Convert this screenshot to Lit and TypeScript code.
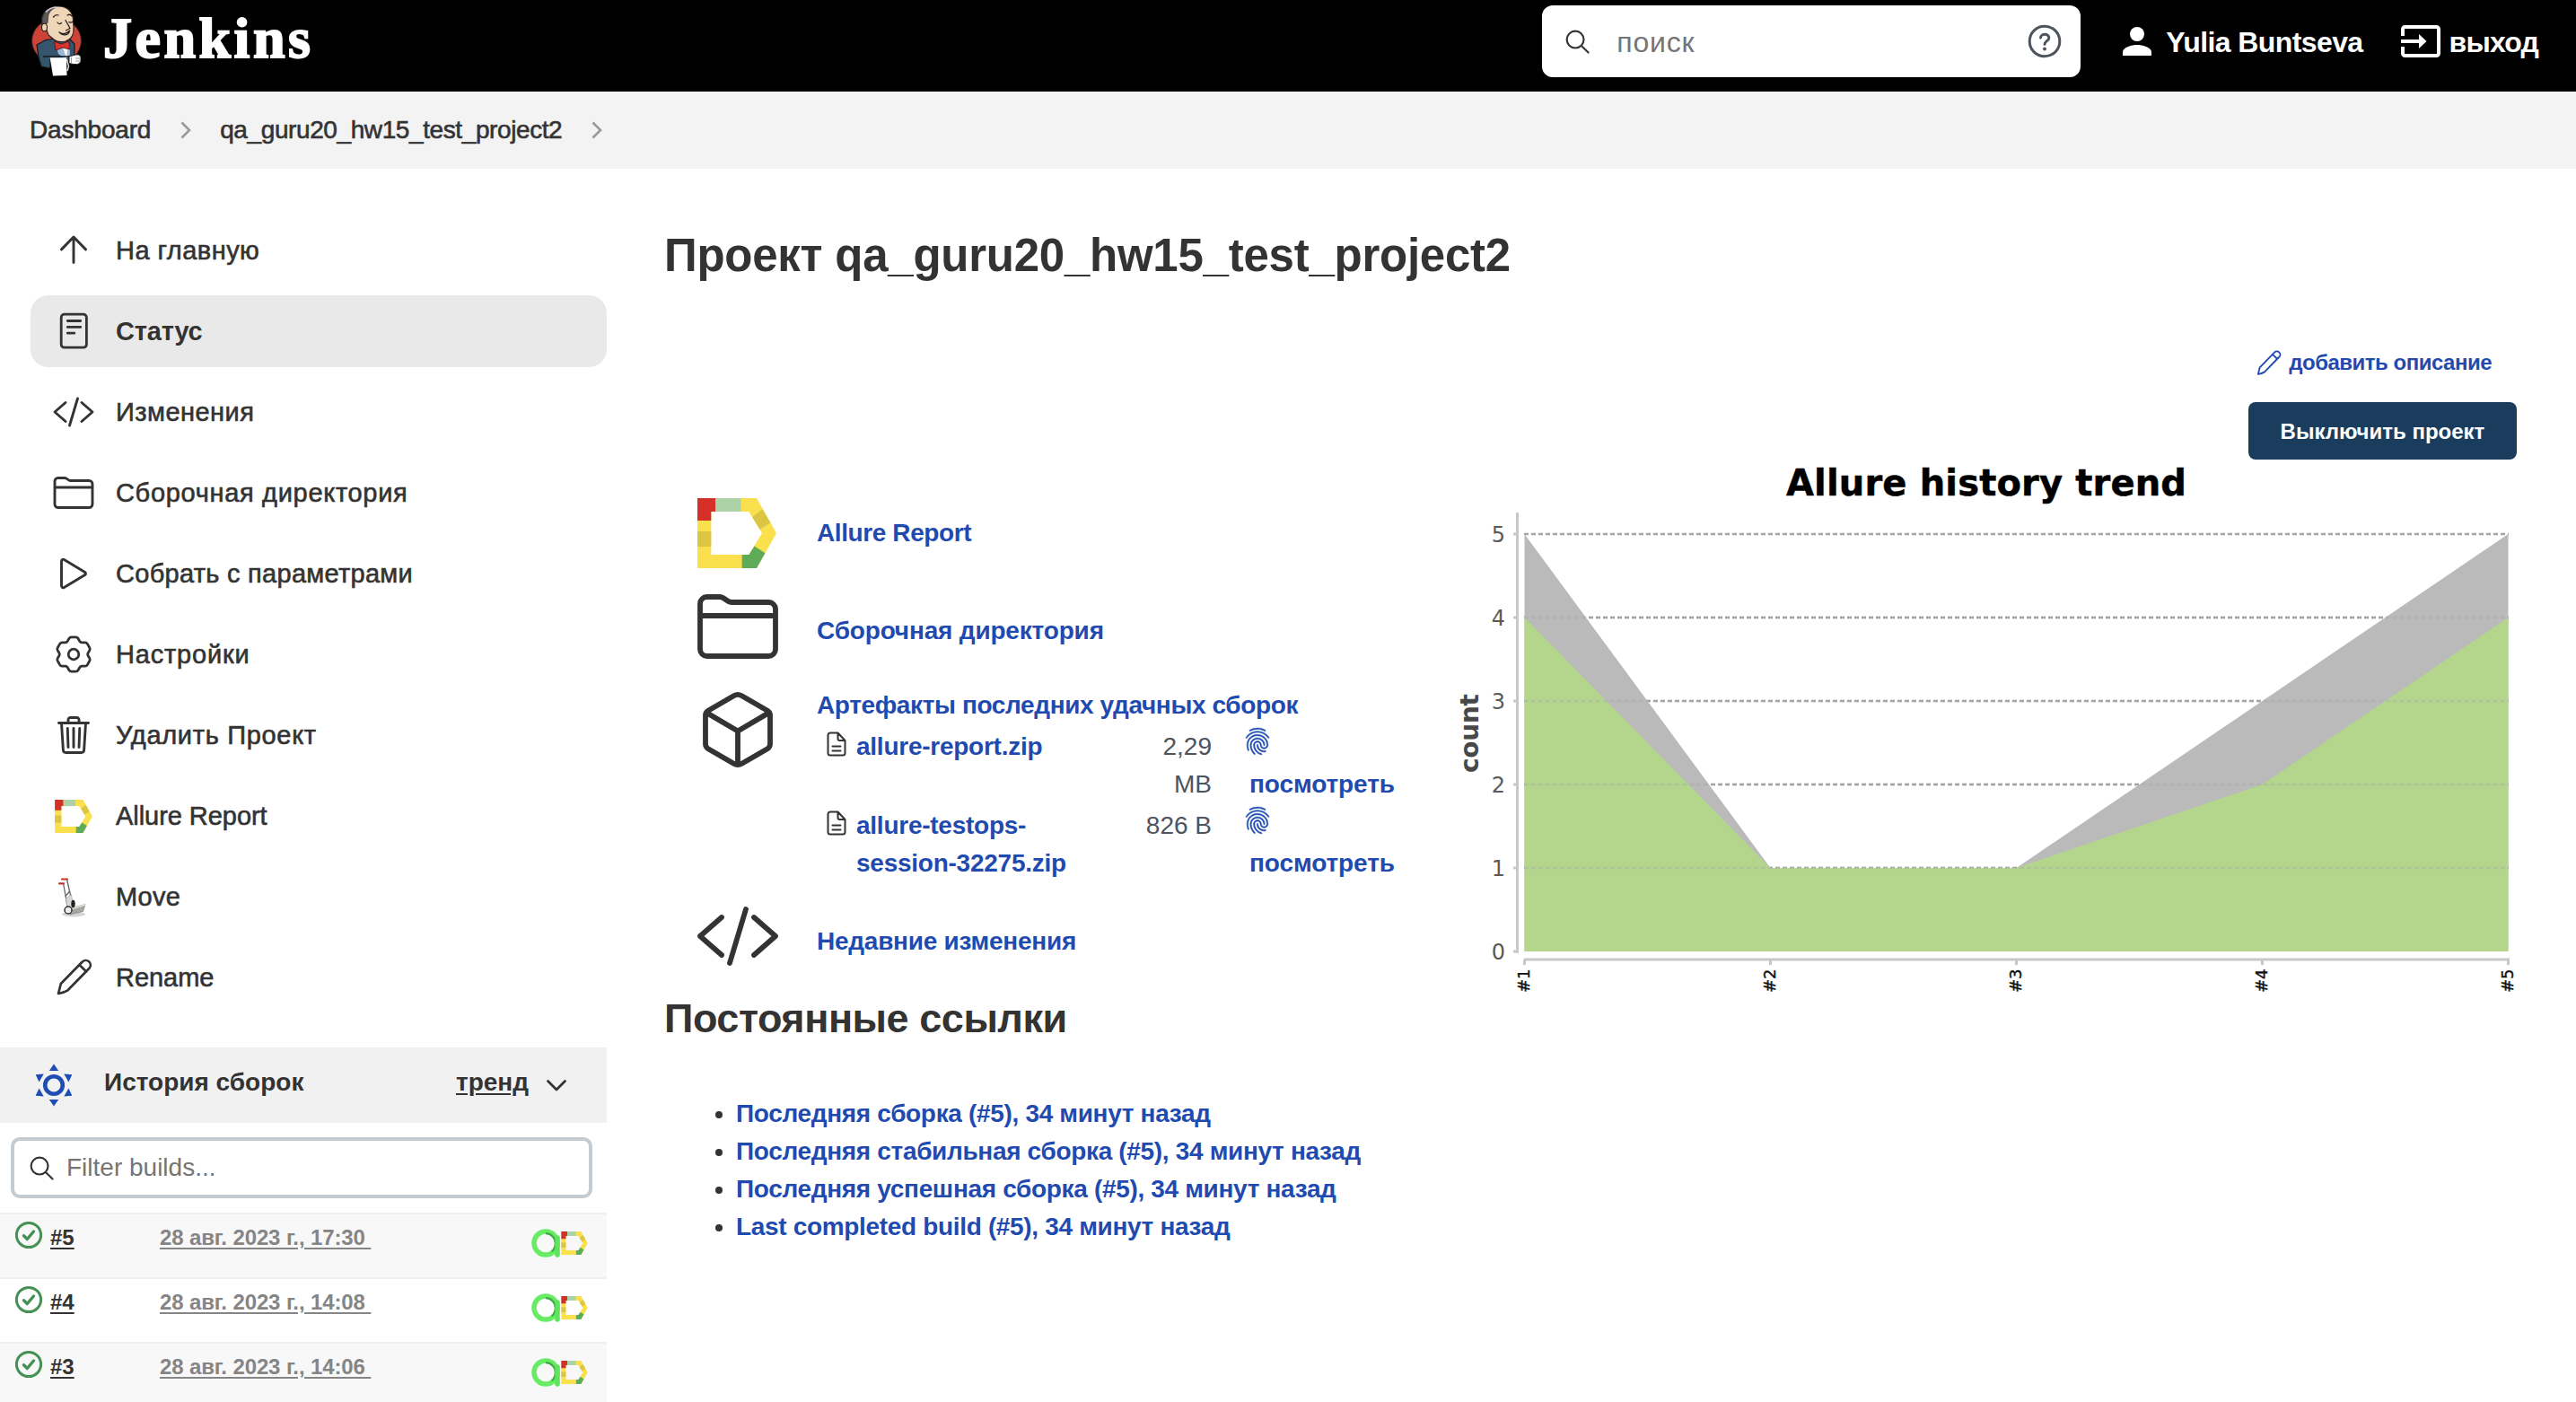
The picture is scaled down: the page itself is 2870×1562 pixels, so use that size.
import { LitElement, html, css, svg, nothing } from "lit";
import { customElement, property } from "lit/decorators.js";

const stroke = (body: unknown, width = 31) => svg`<g fill="none" stroke="currentColor" stroke-width=${width} stroke-linecap="round" stroke-linejoin="round">${body}</g>`;

const allureMark = svg`
  <path fill="#fae04d" fill-rule="evenodd" d="M0 0H66L88 39 66 78H0ZM15.3 15V63H57.4L72 39 57.4 15Z"/>
  <path fill="#d43027" d="M0 0H20V15H15.3V25H0Z"/>
  <path fill="#aed2a8" d="M20 0H48.5V15H20Z"/>
  <path fill="#dbc543" d="M72.6 12.2 81.4 27.6 69.5 34.8 61 21Z"/>
  <path fill="#dbc543" d="M0 37H15.3V54H0Z"/>
  <path fill="#5fac58" d="M49.7 63H57.4L63.5 53.5 75.5 61.3 66 78H49.7Z"/>`;

/* Closed six-lobe outline with every corner eased by a short curve. */
const gearPath = (() => {
  const pts: number[][] = [];
  for (let k = 0; k < 6; k++) {
    const a = (k * Math.PI) / 3;
    for (const [x, y] of [[-4.2, -19.1], [4.2, -19.1], [7.6, -13.2]]) {
      pts.push([24 + x * Math.cos(a) - y * Math.sin(a), 24 + x * Math.sin(a) + y * Math.cos(a)]);
    }
  }
  const mix = (p: number[], q: number[], t: number) => `${(p[0] + (q[0] - p[0]) * t).toFixed(2)} ${(p[1] + (q[1] - p[1]) * t).toFixed(2)}`;
  return pts.map((p, i) => {
    const a = pts[(i + 17) % 18];
    const b = pts[(i + 1) % 18];
    return `${i ? "L" : "M"}${mix(p, a, 0.22)}Q${p[0].toFixed(2)} ${p[1].toFixed(2)} ${mix(p, b, 0.22)}`;
  }).join("") + "Z";
})();

const ICONS: Record<string, { box: string; body: unknown }> = {
  up: { box: "0 0 512 512", body: stroke(svg`<path d="M112 244l144-148 144 148M256 100v300"/>`) },
  status: {
    box: "0 0 48 48",
    body: svg`<rect x="10.2" y="5.2" width="28.2" height="37" rx="3.5" fill="none" stroke="currentColor" stroke-width="2.8"/>
      <path d="M17.3 12.5H31.7M17.3 19.4H31.7M17.3 26.2H24.8" fill="none" stroke="currentColor" stroke-width="2.8" stroke-linecap="round"/>`,
  },
  code: { box: "0 0 512 512", body: stroke(svg`<path d="M160 368L32 256l128-112M352 368l128-112-128-112M304 96l-96 320"/>`) },
  folder: {
    box: "0 0 512 512",
    body: stroke(svg`<path d="M440 432H72a40 40 0 01-40-40V120a40 40 0 0140-40h75.89a40 40 0 0122.19 6.72l27.84 18.56a40 40 0 0022.19 6.72H440a40 40 0 0140 40v240a40 40 0 01-40 40zM32 192h448"/>`),
  },
  play: {
    box: "0 0 512 512",
    body: stroke(svg`<path d="M112 111v290c0 17.44 17 28.52 31 20.16l247.9-148.37c12.12-7.25 12.12-26.33 0-33.58L143 90.84c-14-8.36-31 2.72-31 20.16z"/>`),
  },
  gear: {
    box: "0 0 48 48",
    body: svg`<g fill="none" stroke="currentColor" stroke-width="2.8" stroke-linejoin="round"><circle cx="24" cy="24" r="5.8"/><path d=${gearPath}/></g>`,
  },
  trash: {
    box: "0 0 512 512",
    body: stroke(svg`<path d="M112 112l20 320c.95 18.49 14.4 32 32 32h184c17.67 0 30.87-13.51 32-32l20-320M80 112h352M192 112V72h0a23.93 23.93 0 0124-24h80a23.93 23.93 0 0124 24h0v40M256 176v224M184 176l8 224M328 176l-8 224"/>`),
  },
  allure: { box: "0 0 88 78", body: allureMark },
  truck: {
    box: "0 0 48 48",
    body: svg`<ellipse cx="24" cy="43.500" rx="13" ry="3" fill="#000" opacity=".16"/>
      <path d="M12.500 9 17.500 37M16.500 4.500 22.500 31M14.500 24 19.500 18M15.500 29 20.500 23" fill="none" stroke="#666" stroke-width="1.300"/>
      <path d="M15.500 26l1.500 11 7-1.500-2.500-14z" fill="#d8dad6" stroke="#999" stroke-width=".5"/>
      <path d="M8 9.300h5M11 4.500h6" stroke="#c8332c" stroke-width="2.200" stroke-linecap="round"/>
      <path d="M22 36.500l15-4-2.500 8-14.500 3.500z" fill="#a4a69f" stroke="#777" stroke-width=".6"/>
      <path d="M22 37.500 37 33" stroke="#e4e5e1" stroke-width="1.500"/>
      <ellipse cx="23.500" cy="32" rx="2.200" ry="4.200" fill="#222"/>
      <circle cx="18" cy="39" r="4" fill="#eee" stroke="#333" stroke-width="1.500"/>`,
  },
  pencil: {
    box: "0 0 48 48",
    body: svg`<path d="M7 42 9.800 31 33.500 6.800a5.300 5.300 0 018 7L17.500 38.300Q13 41 7 42ZM30.500 10 38.200 17.500" fill="none" stroke="currentColor" stroke-width="2.700" stroke-linejoin="round" stroke-linecap="round"/>`,
  },
  cube: {
    box: "0 0 512 512",
    body: stroke(svg`<path d="M448 341.37V170.61A32 32 0 00432.11 143l-152-88.46a47.94 47.94 0 00-48.24 0L79.89 143A32 32 0 0064 170.61v170.76A32 32 0 0079.89 369l152 88.46a48 48 0 0048.24 0l152-88.46A32 32 0 00448 341.37zM69 153.99l187 110 187-110M256 463.99v-200"/>`),
  },
  file: {
    box: "0 0 24 30",
    body: svg`<path d="M13.500 2.500H5A2.500 2.500 0 002.500 5V25A2.500 2.500 0 005 27.500H19A2.500 2.500 0 0021.500 25V11ZM13.500 2.500V9A2 2 0 0015.500 11H21.500M7.500 17.500H16.500M7.500 22.500H16.500" fill="none" stroke="currentColor" stroke-width="2" stroke-linejoin="round" stroke-linecap="round"/>`,
  },
  finger: {
    box: "0 0 512 512",
    body: svg`<path fill="currentColor" stroke="currentColor" stroke-width="7" d="M390.420 75.280a10.450 10.450 0 01-5.320-1.440C340.720 50.080 302.350 40 256.350 40c-45.770 0-89.230 11.280-128.760 33.840C122 77 115.110 74.800 111.870 69a12.400 12.400 0 014.630-16.320A281.810 281.810 0 01256.350 16c49.230 0 92.230 11.280 139.390 36.480a12 12 0 014.850 16.080 11.300 11.300 0 01-10.170 6.720zm-330.790 126a11.730 11.730 0 01-6.700-2.160 12.260 12.260 0 01-2.780-16.800c22.890-33.600 52-60 86.690-78.480 72.580-38.840 165.850-39.040 238.660-.24 34.680 18.480 63.800 44.640 86.690 78a12.290 12.290 0 01-2.780 16.800 11.260 11.260 0 01-16.180-2.880c-20.800-30.240-47.150-54-78.360-70.560-66.340-36.240-151.170-36.240-217.280.24-31.440 16.800-57.790 40.800-78.590 71a10 10 0 01-9.370 5.080zM204.100 491a10.660 10.660 0 01-8.090-3.600C175.900 466.480 165 453 149.550 424c-16-29.520-24.270-65.520-24.270-104.160 0-71.280 58.710-129.360 130.840-129.360S387 248.560 387 319.840a11.560 11.560 0 11-23.110 0c0-58.080-48.320-105.360-107.720-105.360S148.400 261.760 148.400 319.840c0 34.560 7.390 66.480 21.490 92.400 14.800 27.600 25 39.360 42.770 58.080a12.670 12.670 0 010 17 12.440 12.440 0 01-8.560 3.680zm165.750-44.400c-27.510 0-51.780-7.200-71.660-21.360a129.100 129.100 0 01-55-105.360 11.570 11.570 0 1123.120 0 104.280 104.280 0 0044.840 85.440c16.410 11.520 35.600 17 58.720 17a147.410 147.410 0 0024-2.400c6.240-1.200 12.250 3.120 13.400 9.840a11.920 11.920 0 01-9.470 13.920 152.280 152.280 0 01-27.950 2.880zM323.380 496a13 13 0 01-3-.48c-36.760-10.560-60.800-24.720-86-50.400-32.370-33.360-50.160-77.760-50.160-125.280 0-38.880 31.900-70.560 71.190-70.560s71.200 31.680 71.200 70.560c0 25.680 21.500 46.560 48.080 46.560s48.080-20.880 48.080-46.560c0-90.480-75.130-163.920-167.590-163.920-65.650 0-125.750 37.920-152.790 96.720-9 19.440-13.640 42.240-13.640 67.200 0 18.720 1.610 48.240 15.480 86.640 2.320 6.240-.69 13.200-6.700 15.360a11.340 11.340 0 01-14.790-7 276.390 276.390 0 01-16.880-95c0-28.800 5.320-55 15.720-77.760 30.750-67 98.940-110.400 173.600-110.400 105.180 0 190.710 84.240 190.710 187.920 0 38.880-32.060 70.560-71.340 70.560s-71.200-31.680-71.200-70.560C303.500 293.920 282 273 255.420 273s-48.080 20.880-48.080 46.560c0 41 15.260 79.440 43.230 108.240 22 22.560 43 35 75.590 44.160 6.240 1.680 9.710 8.400 8.090 14.640a11.390 11.390 0 01-10.870 9.400z"/>`,
  },
  search: {
    box: "0 0 28 28",
    body: svg`<g fill="none" stroke="currentColor" stroke-width="2.200" stroke-linecap="round"><circle cx="11.500" cy="11.500" r="9.800"/><path d="M18.800 18.800 26.500 26.500"/></g>`,
  },
  help: {
    box: "0 0 38 38",
    body: svg`<g fill="none" stroke="currentColor" stroke-width="3" stroke-linecap="round"><circle cx="19" cy="19" r="16.800"/><path d="M14.500 15c.3-5 9.500-5 9.300.3-.1 3.300-4.600 3.400-4.800 7"/></g><circle cx="19" cy="27.500" r="2" fill="currentColor"/>`,
  },
  person: {
    box: "0 0 32 32",
    body: svg`<circle cx="16" cy="8" r="8" fill="currentColor"/><path fill="currentColor" d="M0 32v-4c0-5.400 10.700-8 16-8s16 2.600 16 8v4z"/>`,
  },
  logout: {
    box: "0 0 44 36",
    body: svg`<path d="M2 12V4.500A2.500 2.500 0 014.500 2H39.500A2.500 2.500 0 0142 4.500V31.500A2.500 2.500 0 0139.500 34H4.500A2.500 2.500 0 012 31.500V24" fill="none" stroke="currentColor" stroke-width="4"/><path fill="currentColor" d="M0 16H20V10L28.500 18 20 26V20H0Z"/>`,
  },
  chevron: { box: "0 0 12 20", body: svg`<path d="M1.500 1.500 10 10 1.500 18.500" fill="none" stroke="currentColor" stroke-width="2.600"/>` },
  down: { box: "0 0 24 14", body: svg`<path d="M2.500 2.500 12 12 21.500 2.500" fill="none" stroke="currentColor" stroke-width="2.800" stroke-linecap="round" stroke-linejoin="round"/>` },
  sun: {
    box: "-24 -24 48 48",
    body: svg`<circle r="9.800" fill="none" stroke="currentColor" stroke-width="4.600"/>
      ${[0, 60, 120, 180, 240, 300].map((a) => svg`<path fill="currentColor" transform="rotate(${a})" d="M0-23.500 5.200-16H-5.200Z"/>`)}`,
  },
  ok: {
    box: "0 0 32 32",
    body: svg`<circle cx="16" cy="16" r="13.600" fill="none" stroke="currentColor" stroke-width="3"/><path d="M10.500 16.800 14.300 20.500 21.500 12" fill="none" stroke="currentColor" stroke-width="3.400" stroke-linejoin="round" stroke-linecap="round"/>`,
  },
  testops: {
    box: "0 0 32 32",
    body: svg`<circle cx="16" cy="16" r="13" fill="none" stroke="#68ec66" stroke-width="5.500"/>
      <path d="M16 5.200A10.800 10.800 0 0126.800 16c0 4-1.500 7-4 9.500" fill="none" stroke="#41ad48" stroke-width="2.200"/>
      <path d="M29 10V29" fill="none" stroke="#5fe35f" stroke-width="5.500" stroke-linecap="round"/>`,
  },
};

@customElement("ui-icon")
export class UiIcon extends LitElement {
  @property() name = "";
  static styles = css`
    :host { display: block; flex: none; }
    .icon { display: block; width: 100%; height: 100%; overflow: visible; }
  `;
  render() {
    const icon = ICONS[this.name];
    return icon ? html`<svg class="icon" viewBox=${icon.box}>${icon.body}</svg>` : nothing;
  }
}

@customElement("butler-logo")
export class ButlerLogo extends LitElement {
  static styles = css`
    :host { display: block; flex: none; }
    .pic { display: block; width: 100%; height: 100%; }
  `;
  render() {
    return html`<svg class="pic" viewBox="0 0 58 80">
      <ellipse cx="28" cy="39.500" rx="27.500" ry="25" fill="#cc4338" stroke="#35201d" stroke-width="1"/>
      <path d="M6 44 16 38.500 28 37 43 38 48 43 48 58 40 61 21 60 21 70 11 68 8 58Z" fill="#34556c" stroke="#101820" stroke-width="1.200" stroke-linejoin="round"/>
      <path d="M27 45 43 45 43 55 38 60 30 54Z" fill="#9ab8d3"/>
      <path d="M35 47 41 46 39 59Z" fill="#f6f6f6"/>
      <path d="M25 38 19 33 17 28C12.500 29 11 25 12 21L11.500 15C13 6 21 1 30 1 40 1 46 7 46.500 16L47 24C47.500 31 45 38 38 40Q30 42 25 38Z" fill="#efd6b8" stroke="#2b211b" stroke-width="1.200"/>
      <path d="M25 2.500C15 5 11 12 12 21L15 21 18 19.500 18.500 13C19 8 22 4.500 27 2.500Z" fill="#5c5a5b" stroke="#222" stroke-width=".7"/>
      <path d="M16 7.500C19 4 23 2.300 28 2" fill="none" stroke="#cfcfcf" stroke-width="1.600"/>
      <ellipse cx="14.500" cy="24.500" rx="3" ry="4.200" fill="#efd6b8" stroke="#2b211b" stroke-width="1.100"/>
      <path d="M24.500 13Q27 9.500 30 11M40 11Q43 9 45 12M29 19Q31 22 33.500 19.500M42 18.500Q44 20 46 18M38 16.500 43 25.500 38.500 28M31 30Q37 34 43 28L41 31.500Q36 35 31 30" fill="none" stroke="#2b211b" stroke-width="1.300" stroke-linecap="round"/>
      <path d="M25.500 40 33 43 42 40 42.500 49 35 47 27 50Z" fill="#d8352c" stroke="#4b1512" stroke-width=".9"/>
      <path d="M13 57H44" stroke="#101820" stroke-width="1.500"/>
      <path d="M20.700 58.300H39L39.500 78 24 78.500Z" fill="#fff"/>
      <path d="M39.500 60 41.500 68 40 73" fill="none" stroke="#ddd" stroke-width="1.500"/>
      <path d="M42 57 49 55Q53 54 55 57V63Q52 67 47 65.500L42 64.500Z" fill="#fff" stroke="#222" stroke-width="1"/>
      <path d="M49 59H54M49 62H54M44.500 58V64" stroke="#777" stroke-width=".7"/>
    </svg>`;
  }
}

@customElement("trend-chart")
export class TrendChart extends LitElement {
  static styles = css`
    :host { display: block; }
    .plot { display: block; overflow: visible; font-family: "DejaVu Sans", sans-serif; }
    .title { font-size: 40px; font-weight: 700; fill: #000; stroke: #000; stroke-width: 0.5px; }
    .axis { font-size: 28px; font-weight: 700; fill: #484848; }
    .tick { font-size: 24px; fill: #5a5a5a; }
    .cat { font-size: 18px; fill: #111; stroke: #111; stroke-width: 0.4px; }
    .grid { stroke: #a4a4a4; stroke-width: 2.5; stroke-dasharray: 5 3; }
    .line { stroke: #c8c8c8; stroke-width: 3; fill: none; }
  `;
  private total = [5, 1, 1, 3, 5];
  private passed = [4, 1, 1, 2, 4];
  private x(i: number) { return 78.5 + i * 274; }
  private y(v: number) { return 540 - v * 93; }
  private area(v: number[]) {
    return `M${this.x(0)} ${this.y(0)}` + v.map((n, i) => `L${this.x(i)} ${this.y(n)}`).join("") + `L${this.x(4)} ${this.y(0)}Z`;
  }
  render() {
    return html`<svg class="plot" width="1190" height="585" viewBox="0 0 1190 585">
      <text class="title" x="370" y="31.500" textLength="446">Allure history trend</text>
      <text class="axis" transform="translate(27 341) rotate(-90)" textLength="88">count</text>
      ${[1, 2, 3, 4, 5].map((v) => svg`<path class="grid" d="M78 ${this.y(v)}H1175"/>`)}
      <path d=${this.area(this.total)} fill="#bababa"/>
      <path d=${this.area(this.passed)} fill="#b3d68c"/>
      ${[1, 2, 3, 4].map((v) => svg`<path class="grid" opacity=".35" d="M78 ${this.y(v)}H1175"/>`)}
      <path class="line" d="M70.500 51V542"/>
      <path class="line" d="M78 549H1176"/>
      ${[0, 1, 2, 3, 4, 5].map((v) => svg`<path class="line" d="M66 ${this.y(v)}H70"/><text class="tick" x="57" y=${this.y(v) + 8.5} text-anchor="end">${v}</text>`)}
      ${[1, 2, 3, 4, 5].map((v, i) => svg`<path class="line" d="M${this.x(i)} 549V555"/><text class="cat" transform="translate(${this.x(i) + 5} 586) rotate(-90)">#${v}</text>`)}
    </svg>`;
  }
}

const NAV = [
  ["up", "На главную"], ["status", "Статус"], ["code", "Изменения"], ["folder", "Сборочная директория"],
  ["play", "Собрать с параметрами"], ["gear", "Настройки"], ["trash", "Удалить Проект"],
  ["allure", "Allure Report"], ["truck", "Move"], ["pencil", "Rename"],
];
const BUILDS = [["#5", "28 авг. 2023 г., 17:30"], ["#4", "28 авг. 2023 г., 14:08"], ["#3", "28 авг. 2023 г., 14:06"]];
const LINKS = [
  "Последняя сборка (#5), 34 минут назад", "Последняя стабильная сборка (#5), 34 минут назад",
  "Последняя успешная сборка (#5), 34 минут назад", "Last completed build (#5), 34 минут назад",
];

@customElement("app-root")
export class AppRoot extends LitElement {
  static styles = css`
    :host { display: block; height: 1562px; overflow: hidden; background: #fff; color: #333; font: 28px/42px "Liberation Sans", Arial, sans-serif; }
    * { box-sizing: border-box; }
    .head { height: 102px; background: #000; color: #fff; display: flex; align-items: flex-start; padding: 6px 42px 0 35px; }
    .butler { width: 58px; height: 80px; }
    .brand { margin-left: 22px; font: 700 64px/73px "Liberation Serif", serif; letter-spacing: 3.5px; -webkit-text-stroke: 2px #fff; }
    .find { margin-left: auto; width: 600px; height: 80px; background: #fff; border-radius: 12px; display: flex; align-items: center; padding: 0 21px 0 26px; color: #333; }
    .find .lens { width: 27px; height: 27px; }
    .find .hint { flex: 1; margin-left: 30px; font-size: 32px; color: #757575; padding-top: 1px; letter-spacing: 0.8px; }
    .find .help { width: 38px; height: 38px; color: #4d545d; }
    .user, .exit { display: flex; align-items: center; height: 80px; font-weight: 700; font-size: 32px; letter-spacing: -0.6px; }
    .user { margin-left: 47px; gap: 16px; }
    .user .pic { width: 32px; height: 32px; }
    .exit { margin-left: 42px; gap: 10px; letter-spacing: -0.8px; }
    .exit .pic { width: 44px; height: 36px; }
    .txt { padding-top: 1px; }
    .crumbs { height: 86px; background: #f3f3f3; display: flex; align-items: center; padding-left: 33px; -webkit-text-stroke: 0.6px #333; letter-spacing: -0.2px; }
    .crumbs .sep { width: 12px; height: 20px; color: #999; margin: 0 32px 0 33px; }
    .crumbs .job { letter-spacing: -0.4px; }
    .cols { display: grid; grid-template-columns: 676px 1fr; }
    .nav { padding: 51px 0 0 34px; display: grid; gap: 10px; }
    .item { height: 80px; display: flex; align-items: center; border-radius: 20px; padding-left: 24px; gap: 23px; font-size: 29px; letter-spacing: 0.45px; -webkit-text-stroke: 0.6px #333; }
    .item.status { background: #e9e9e9; font-weight: 700; letter-spacing: -0.2px; -webkit-text-stroke: 0; }
    .item.folder, .item.trash { letter-spacing: 0.68px; }
    .item.gear { letter-spacing: 0.8px; }
    .item.play { letter-spacing: 0.28px; }
    .item.allure, .item.pencil { letter-spacing: -0.05px; }
    .item.truck { letter-spacing: 0.3px; }
    .ic { width: 48px; height: 48px; }
    .ic.allure { width: 42px; height: 37px; margin: 0 3px; }
    .hist { margin-top: 38px; height: 84px; background: #f1f1f1; display: flex; align-items: center; padding: 0 44px 0 36px; font-weight: 700; }
    .hist .sun { width: 48px; height: 48px; color: #1f4db3; }
    .hist .name { margin-left: 32px; flex: 1; padding-bottom: 6px; }
    .hist .trend { text-decoration: underline; text-underline-offset: 3px; padding-bottom: 6px; }
    .hist .down { width: 24px; height: 14px; margin-left: 19px; }
    .filter { margin: 16px 16px 16px 12px; height: 68px; border: 4px solid #c4ccd1; border-radius: 10px; display: flex; align-items: center; padding-left: 17px; gap: 14px; color: #333; }
    .filter .lens { width: 27px; height: 27px; }
    .filter .hint { color: #757575; }
    .build { height: 72px; border-top: 2px solid #efefef; display: flex; font-size: 24px; font-weight: 700; line-height: 32px; padding: 8px 21px 0 16px; }
    .build:nth-of-type(odd) { background: #f8f8f8; }
    .build .ok { width: 32px; height: 32px; color: #459153; margin-top: -1px; }
    .build .num { width: 130px; padding: 2px 0 0 8px; text-decoration: underline; text-underline-offset: 3px; }
    .build .date { flex: 1; padding-top: 2px; color: #858585; text-decoration: underline; text-underline-offset: 3px; white-space: pre; letter-spacing: -0.12px; }
    .build .to { width: 32px; height: 32px; margin-top: 8px; }
    .build .al { width: 30px; height: 26px; margin: 11px 0 0 1px; }
    .main { padding: 53px 66px 0 64px; display: flex; flex-direction: column; }
    .h1 { margin: 0; font-size: 51px; line-height: 88px; font-weight: 700; letter-spacing: -0.25px; }
    a { color: #1f4bb0; text-decoration: none; font-weight: 700; }
    .body { display: flex; justify-content: space-between; margin-top: 44px; }
    .links { padding: 182px 0 0 37px; display: grid; grid-template-rows: 95px 115px 230px 110px; }
    .row { display: grid; grid-template-columns: 133px 1fr; align-items: start; }
    .row .pic { width: 96px; height: 96px; margin-left: -3px; }
    .row.report .pic { width: 88px; height: 78px; margin-left: 0; }
    .row.report .lbl { padding-top: 18px; letter-spacing: -0.4px; }
    .row.space .lbl { padding-top: 32px; letter-spacing: -0.18px; }
    .row.recent .lbl { padding-top: 33px; letter-spacing: -0.25px; }
    .heading { letter-spacing: -0.38px; }
    .right { display: flex; flex-direction: column; align-items: flex-end; }
    .edit { display: flex; gap: 6px; align-items: center; font-size: 24px; line-height: 40px; margin: 11px 28px 0 0; color: #1f4bb0; letter-spacing: -0.5px; }
    .edit .pen { width: 33px; height: 33px; }
    .btn { margin-top: 24px; width: 299px; height: 64px; border-radius: 8px; background: #1b3d5d; color: #fff; font-weight: 700; font-size: 24px; line-height: 65px; text-align: center; }
    .chart { margin: 8px -6px 0 0; width: 1190px; height: 585px; }
    .arts { display: grid; grid-template-columns: 34px 286px 110px 1fr; row-gap: 4px; padding: 4px 0 0 10px; letter-spacing: -0.25px; }
    .size { text-align: right; color: #4d545d; letter-spacing: 0; }
    .file { width: 24px; height: 30px; margin-top: 3px; }
    .mark { padding-left: 42px; letter-spacing: -0.1px; }
    .fp { width: 32px; height: 32px; margin: -1px 0 11px -7px; color: #1f4bb0; }
    .h2 { margin: 0; font-size: 45px; line-height: 60px; font-weight: 700; letter-spacing: -0.45px; }
    .perma { margin: 55px 0 0; padding-left: 80px; letter-spacing: -0.33px; }
  `;
  render() {
    return html`
      <div class="head">
        <butler-logo class="butler"></butler-logo>
        <span class="brand">Jenkins</span>
        <div class="find"><ui-icon class="lens" name="search"></ui-icon><span class="hint">поиск</span><ui-icon class="help" name="help"></ui-icon></div>
        <div class="user"><ui-icon class="pic" name="person"></ui-icon><span class="txt">Yulia Buntseva</span></div>
        <div class="exit"><ui-icon class="pic" name="logout"></ui-icon><span class="txt">выход</span></div>
      </div>
      <div class="crumbs"><span>Dashboard</span><ui-icon class="sep" name="chevron"></ui-icon><span class="job">qa_guru20_hw15_test_project2</span><ui-icon class="sep" name="chevron"></ui-icon></div>
      <div class="cols">
        <div class="side">
          <div class="nav">
            ${NAV.map(([icon, label]) => html`<div class="item ${icon}"><ui-icon class="ic ${icon}" name=${icon}></ui-icon><span>${label}</span></div>`)}
          </div>
          <div class="hist"><ui-icon class="sun" name="sun"></ui-icon><span class="name">История сборок</span><span class="trend">тренд</span><ui-icon class="down" name="down"></ui-icon></div>
          <div class="filter"><ui-icon class="lens" name="search"></ui-icon><span class="hint">Filter builds...</span></div>
          <section>
            ${BUILDS.map(([n, d]) => html`<div class="build"><ui-icon class="ok" name="ok"></ui-icon><span class="num">${n}</span><span class="date">${d + " "}</span><ui-icon class="to" name="testops"></ui-icon><ui-icon class="al" name="allure"></ui-icon></div>`)}
          </section>
        </div>
        <div class="main">
          <h1 class="h1">Проект qa_guru20_hw15_test_project2</h1>
          <div class="body">
            <div class="links">
              <div class="row report"><ui-icon class="pic" name="allure"></ui-icon><a class="lbl">Allure Report</a></div>
              <div class="row space"><ui-icon class="pic" name="folder"></ui-icon><a class="lbl">Сборочная директория</a></div>
              <div class="row"><ui-icon class="pic" name="cube"></ui-icon>
                <div class="lbl"><a class="heading">Артефакты последних удачных сборок</a>
                  <div class="arts">
                    <ui-icon class="file" name="file"></ui-icon><a>allure-report.zip</a><span class="size">2,29<br />MB</span><div class="mark"><ui-icon class="fp" name="finger"></ui-icon><a>посмотреть</a></div>
                    <ui-icon class="file" name="file"></ui-icon><a>allure-testops-<br />session-32275.zip</a><span class="size">826 B</span><div class="mark"><ui-icon class="fp" name="finger"></ui-icon><a>посмотреть</a></div>
                  </div>
                </div>
              </div>
              <div class="row recent"><ui-icon class="pic" name="code"></ui-icon><a class="lbl">Недавние изменения</a></div>
            </div>
            <div class="right">
              <div class="edit"><ui-icon class="pen" name="pencil"></ui-icon><a>добавить описание</a></div>
              <div class="btn">Выключить проект</div>
              <trend-chart class="chart"></trend-chart>
            </div>
          </div>
          <h2 class="h2">Постоянные ссылки</h2>
          <ul class="perma">${LINKS.map((l) => html`<li><a>${l}</a></li>`)}</ul>
        </div>
      </div>
    `;
  }
}
